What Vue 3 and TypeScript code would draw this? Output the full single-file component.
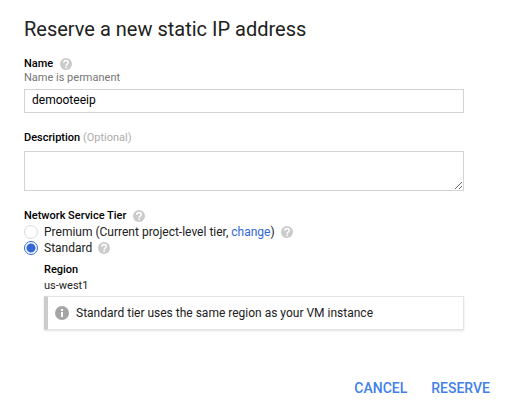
<script setup lang="ts">
import { defineComponent, h, ref } from 'vue'

const name = ref('demooteeip')
const description = ref('')
const tier = ref<'premium' | 'standard'>('standard')

const HelpIcon = defineComponent({
  setup: () => () =>
    h('svg', { width: 12, height: 12, viewBox: '0 0 24 24', 'aria-hidden': 'true', style: { display: 'block' } }, [
      h('circle', { cx: 12, cy: 12, r: 12, fill: '#cbcbcb' }),
      h('path', {
        d: 'M7.6 9.4C7.6 6.8 9.4 5.1 12 5.1s4.4 1.6 4.4 4c0 3-4.2 3.2-4.2 6.2',
        fill: 'none',
        stroke: '#fff',
        'stroke-width': 3,
      }),
      h('rect', { x: 10.6, y: 17, width: 3.2, height: 3.2, fill: '#fff' }),
    ]),
})
</script>

<template>
  <form class="dialog" @submit.prevent>
    <h1 class="title">Reserve a new static IP address</h1>

    <div class="fields">
      <div class="field">
        <div class="label-row">
          <label class="label" for="name">Name</label>
          <HelpIcon />
        </div>
        <p id="name-hint" class="hint">Name is permanent</p>
        <input id="name" v-model="name" class="box text-input" type="text" aria-describedby="name-hint" />
      </div>

      <div class="field">
        <label class="label-row" for="description">
          <span class="label">Description <span class="optional">(Optional)</span></span>
        </label>
        <textarea id="description" v-model="description" class="box text-area"></textarea>
      </div>

      <div class="tier" role="radiogroup" aria-labelledby="tier-label">
        <div class="label-row">
          <span id="tier-label" class="label">Network Service Tier</span>
          <HelpIcon />
        </div>
        <div class="option">
          <input id="premium" v-model="tier" class="radio" type="radio" name="tier" value="premium" />
          <span><label for="premium">Premium (Current project-level tier, </label><a class="link" href="#">change</a>)</span>
          <HelpIcon />
        </div>
        <div class="option">
          <input id="standard" v-model="tier" class="radio" type="radio" name="tier" value="standard" />
          <label for="standard">Standard</label>
          <HelpIcon />
        </div>

        <div class="details">
          <div class="label region-label">Region</div>
          <div class="region">us-west1</div>
          <div class="note">
            <svg width="14" height="14" viewBox="0 0 14 14" aria-hidden="true">
              <circle cx="7" cy="7" r="7" fill="#a5a5a5" />
              <path d="M6 3h2v2H6zM6 6h2v5H6z" fill="#fff" />
            </svg>
            <span>Standard tier uses the same region as your VM instance</span>
          </div>
        </div>
      </div>
    </div>

    <div class="actions">
      <button class="action" type="button">CANCEL</button>
      <button class="action" type="submit">RESERVE</button>
    </div>
  </form>
</template>

<style>
body {
  background: #fff;
}
</style>

<style scoped>
.dialog {
  padding: 17px 21px 0 24px;
  font-family: Roboto, 'Liberation Sans', sans-serif;
  font-size: 12px;
  line-height: 16px;
  color: #212121;
}

.title {
  margin: 0 0 15px;
  font-size: 20px;
  font-weight: 400;
  line-height: 24px;
}

.fields {
  display: flex;
  flex-direction: column;
  padding-right: 26px;
}

.field {
  display: flex;
  flex-direction: column;
  margin-bottom: 17px;
}

.label-row {
  display: flex;
  align-items: center;
  gap: 7px;
  height: 16px;
}

.label {
  font-size: 11px;
  font-weight: 500;
  color: #000;
}

.optional {
  font-weight: 400;
  color: #acacac;
}

.hint {
  margin: 0;
  font-size: 11px;
  line-height: 12px;
  color: #757575;
}

.box {
  box-sizing: border-box;
  width: 100%;
  margin: 5px 0 0;
  border: 1px solid #d3d3d3;
  border-radius: 0;
  background: #fff;
  font: inherit;
  color: #000;
  outline: none;
}

.text-input {
  height: 24px;
  padding: 0 7px 2px;
}

.text-area {
  display: block;
  height: 40px;
  padding: 4px 7px;
  resize: both;
}

.option {
  display: flex;
  align-items: center;
  gap: 6px;
  height: 16px;
}

.radio {
  appearance: none;
  box-sizing: border-box;
  width: 14px;
  height: 14px;
  margin: 0;
  border: 1px solid #d8d8d8;
  border-radius: 50%;
  background: #fff;
}

.radio:checked {
  border-color: #3367d6;
  background: radial-gradient(circle, #3367d6 4px, #fff 5px);
}

.link {
  color: #3367d6;
  text-decoration: none;
}

.details {
  padding: 6px 0 0 20px;
}

.region {
  font-size: 11px;
}

.note {
  display: flex;
  align-items: center;
  gap: 7px;
  box-sizing: border-box;
  height: 34px;
  margin-top: 2px;
  padding-left: 7px;
  border: 1px solid #e4e4e4;
  border-left: 4px solid #cbcbcb;
  box-shadow: 0 1px 2px rgba(0, 0, 0, 0.12);
}

.actions {
  display: flex;
  justify-content: flex-end;
  gap: 24px;
  margin-top: 46px;
}

.action {
  padding: 0;
  border: 0;
  background: none;
  font: inherit;
  font-size: 14px;
  font-weight: 500;
  line-height: 24px;
  color: #427fed;
  cursor: pointer;
}
</style>
